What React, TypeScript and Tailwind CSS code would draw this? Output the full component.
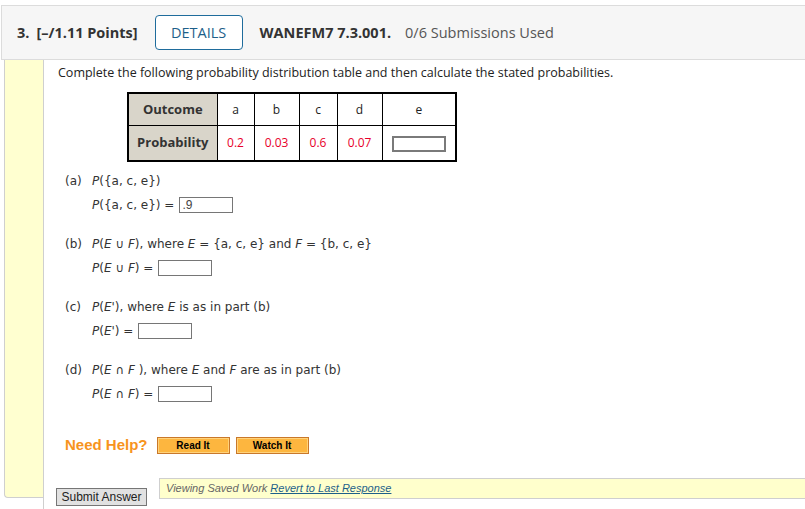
import React from "react";

function Answer({ w = 54, value = "" }: { w?: number; value?: string }) {
  return (
    <span
      className="inline-block h-[16px] border border-[#767676] bg-white align-middle text-[12px] leading-[14px] pl-[2px] text-[#444] font-['Liberation_Sans',Arial,sans-serif]"
      style={{ width: w }}
    >
      {value}
    </span>
  );
}

function Part({ label, question, answer }: { label: string; question: React.ReactNode; answer: React.ReactNode }) {
  return (
    <div className="flex flex-col gap-[8px]">
      <div className="flex h-[16px] items-center">
        <span className="w-[27px]">{label}</span>
        <span>{question}</span>
      </div>
      <div className="pl-[27px] flex h-[16px] items-center gap-[5px]">{answer}</div>
    </div>
  );
}

export default function App() {
  const sans = "font-['Open_Sans',sans-serif]";
  return (
    <div className={`w-[805px] h-[509px] overflow-hidden bg-white pt-[5px] pl-[1px] ${sans}`}>
      {/* header */}
      <div className="h-[55px] border border-r-0 border-[#dcdcdc] bg-[#f6f6f6] flex items-center text-[14.5px] text-[#333]">
        <span className="font-bold ml-[15px]">3.</span>
        <span className="font-bold ml-[7px]">[–/1.11 Points]</span>
        <span className="ml-[17px] h-[35px] w-[88px] border border-[#1f6c9c] rounded-[4px] bg-white flex items-center justify-center text-[#1d5f8a] text-[14.5px]">
          DETAILS
        </span>
        <span className="font-bold ml-[17px]">WANEFM7 7.3.001.</span>
        <span className="ml-[14px] text-[#555]">0/6 Submissions Used</span>
      </div>

      <div className="flex ml-[3px] h-[450px]">
        <div className="w-[39px] h-[438px] bg-[#ffffd0] border-l border-b border-[#cfcfcf] rounded-bl-[4px] shrink-0"></div>
        <div className="flex-1 border-l border-[#cfcfcf] flex flex-col pb-[4px]">
          <div className="pl-[14px] pt-[4px] text-[12.5px] text-[#222]">
            <p>Complete the following probability distribution table and then calculate the stated probabilities.</p>

            <table className="ml-[69px] mt-[9px] border-collapse border-2 border-black text-[12px] text-center">
              <tbody>
                <tr className="h-[33px]">
                  <td className="w-[89px] border border-black bg-[#d9d5ca] font-bold text-[#333] text-[13px]">Outcome</td>
                  <td className="w-[37px] border border-black">a</td>
                  <td className="w-[45px] border border-black">b</td>
                  <td className="w-[38px] border border-black">c</td>
                  <td className="w-[45px] border border-black">d</td>
                  <td className="w-[74px] border border-black">e</td>
                </tr>
                <tr className="h-[35px]">
                  <td className="border border-black bg-[#d9d5ca] font-bold text-[#333] text-[13px]">Probability</td>
                  <td className="border border-black text-[#e8002a]">0.2</td>
                  <td className="border border-black text-[#e8002a]">0.03</td>
                  <td className="border border-black text-[#e8002a]">0.6</td>
                  <td className="border border-black text-[#e8002a]">0.07</td>
                  <td className="border border-black">
                    <span className="inline-block w-[54px] h-[16px] border-2 border-[#7a7a7a] align-middle"></span>
                  </td>
                </tr>
              </tbody>
            </table>

            <div className="pl-[7px] mt-[11px] flex flex-col gap-[23px] text-[#333] text-[12px] leading-[16px] font-['DejaVu_Sans',Verdana,sans-serif]">
              <Part
                label="(a)"
                question={<><i>P</i>({"{"}a, c, e{"}"})</>}
                answer={<><span><i>P</i>({"{"}a, c, e{"}"}) =</span><Answer value=".9" /></>}
              />
              <Part
                label="(b)"
                question={<><i>P</i>(<i>E</i> ∪ <i>F</i>), where <i>E</i> = {"{"}a, c, e{"}"} and <i>F</i> = {"{"}b, c, e{"}"}</>}
                answer={<><span><i>P</i>(<i>E</i> ∪ <i>F</i>) =</span><Answer /></>}
              />
              <Part
                label="(c)"
                question={<><i>P</i>(<i>E</i>'), where <i>E</i> is as in part (b)</>}
                answer={<><span><i>P</i>(<i>E</i>') =</span><Answer /></>}
              />
              <Part
                label="(d)"
                question={<><i>P</i>(<i>E</i> ∩ <i>F</i> ), where <i>E</i> and <i>F</i> are as in part (b)</>}
                answer={<><span><i>P</i>(<i>E</i> ∩ <i>F</i>) =</span><Answer /></>}
              />
            </div>

            <div className="mt-[32px] pl-[7px] flex items-center font-['Liberation_Sans',Arial,sans-serif]">
              <span className="text-[15px] font-bold text-[#f7941d]">Need Help?</span>
              <span className="ml-[9px] w-[73px] h-[17px] bg-[#fdb63f] border border-[#c9782a] shadow-[inset_0_0_0_1px_#ffd27a] flex items-center justify-center text-[10px] font-bold text-black">Read It</span>
              <span className="ml-[6px] w-[73px] h-[17px] bg-[#fdb63f] border border-[#c9782a] shadow-[inset_0_0_0_1px_#ffd27a] flex items-center justify-center text-[10px] font-bold text-black">Watch It</span>
            </div>
          </div>

          <div className="mt-auto flex items-start font-['Liberation_Sans',Arial,sans-serif]">
            <span className="ml-[12px] mt-[10px] w-[91px] h-[18px] bg-[#e1e1e1] border border-[#767676] flex items-center justify-center text-[12px] text-[#222]">Submit Answer</span>
            <div className="ml-[12px] flex-1 h-[21px] bg-[#ffffcc] border-t border-b border-l border-[#cfcfcf] flex items-center pl-[6px] text-[11px] text-[#666] italic">
              Viewing Saved Work&nbsp;<span className="text-[#1d5f8a] underline">Revert to Last Response</span>
            </div>
          </div>
        </div>
      </div>
    </div>
  );
}
